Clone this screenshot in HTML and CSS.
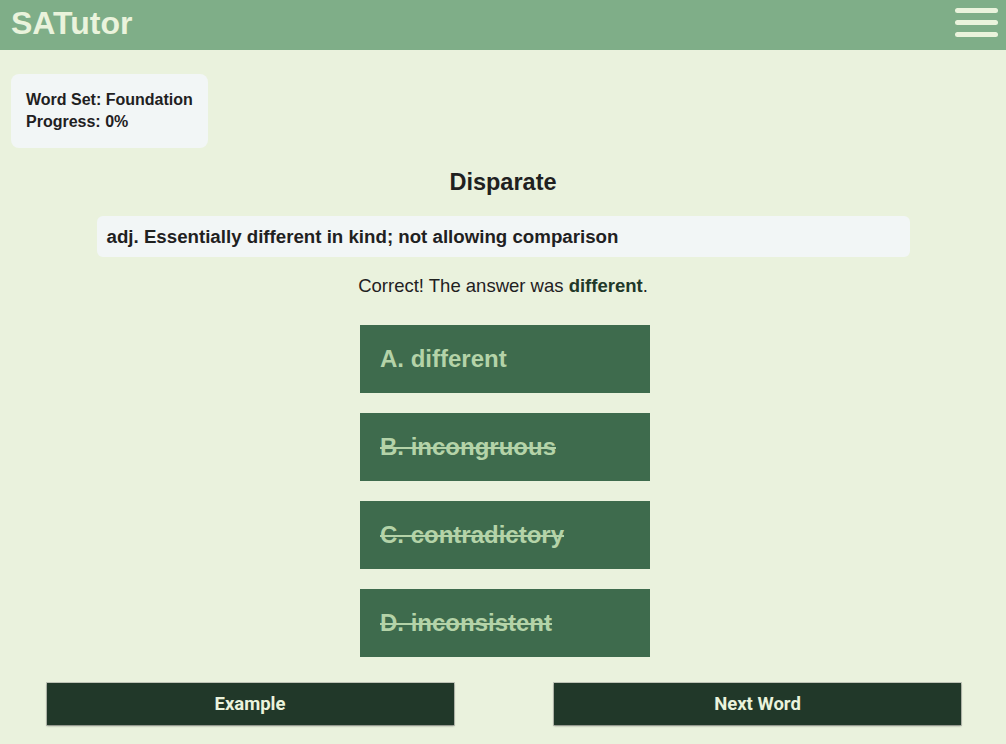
FILE: index.html
```html
<!DOCTYPE html>
<html lang="en">
<head>
<meta charset="utf-8">
<title>SATutor</title>
<link rel="stylesheet" href="styles.css">
</head>
<body>
<header class="topbar">
  <div class="brand">SATutor</div>
  <div class="menu" aria-label="Menu">
    <span class="bar"></span>
    <span class="bar"></span>
    <span class="bar"></span>
  </div>
</header>
<main class="page">
  <div class="info-card">
    <div>Word Set: Foundation</div>
    <div>Progress: 0%</div>
  </div>
  <h1 class="word">Disparate</h1>
  <div class="definition">adj. Essentially different in kind; not allowing comparison</div>
  <p class="feedback">Correct! The answer was <strong>different</strong>.</p>
  <div class="choices">
    <div class="choice">A. different</div>
    <div class="choice struck">B. incongruous</div>
    <div class="choice struck">C. contradictory</div>
    <div class="choice struck">D. inconsistent</div>
  </div>
  <div class="actions">
    <button class="action">Example</button>
    <button class="action">Next Word</button>
  </div>
</main>
</body>
</html>
```

FILE: styles.css
```css
html, body {
  margin: 0;
  padding: 0;
}
body {
  background: #eaf2dd;
  font-family: "Liberation Sans", Arial, sans-serif;
  color: #1f211f;
  min-height: 744px;
}
.topbar {
  height: 50px;
  background: #7fae88;
  display: flex;
  align-items: center;
  justify-content: space-between;
  padding: 0 8px 0 11px;
}
.brand {
  font-size: 32px;
  font-weight: bold;
  color: #eaf3dc;
  margin-top: -4px;
}
.menu {
  display: flex;
  flex-direction: column;
  gap: 7px;
  width: 43px;
  margin-top: -6px;
}
.bar {
  display: block;
  height: 5px;
  border-radius: 3px;
  background: #eaf3dc;
}
.page {
  display: flex;
  flex-direction: column;
  align-items: center;
}
.info-card {
  align-self: flex-start;
  margin: 24px 0 0 11px;
  padding: 15px 15px;
  background: #f2f6f6;
  border-radius: 8px;
  font-size: 16px;
  font-weight: bold;
  line-height: 22px;
  color: #1f211f;
}
.word {
  margin: 20px 0 0;
  font-size: 23.5px;
  line-height: 28px;
  font-weight: bold;
  color: #1f211f;
}
.definition {
  margin-top: 20px;
  width: 793px;
  padding: 10px 10px;
  background: #f2f6f6;
  border-radius: 6px;
  font-size: 18.7px;
  font-weight: bold;
  line-height: 21px;
  color: #1f211f;
}
.feedback {
  margin: 18px 0 0;
  font-size: 18.5px;
  line-height: 22px;
  color: #1f211f;
}
.feedback strong {
  color: #213829;
}
.choices {
  margin-top: 28px;
  display: flex;
  flex-direction: column;
  gap: 20px;
  margin-left: 4px;
}
.choice {
  width: 270px;
  height: 68px;
  padding-left: 20px;
  display: flex;
  align-items: center;
  background: #3e6b4d;
  color: #b4d3a8;
  font-size: 24px;
  font-weight: bold;
}
.choice.struck {
  text-decoration: line-through;
  text-decoration-thickness: 2px;
}
.actions {
  margin-top: 26px;
  width: 100%;
  display: grid;
  grid-template-columns: 1fr 1fr;
}
.action {
  justify-self: center;
  width: 407px;
  height: 42px;
  border: none;
  background: #213829;
  color: #eaf3dc;
  font-family: Roboto, "Liberation Sans", sans-serif;
  font-size: 18.5px;
  font-weight: bold;
  box-shadow: 0 1px 2px rgba(0, 0, 0, 0.35), 0 0 0 1px rgba(120, 120, 120, 0.35);
  cursor: pointer;
}
.action:first-child {
  margin-left: -3px;
}
.action:last-child {
  margin-left: 6px;
}
```
